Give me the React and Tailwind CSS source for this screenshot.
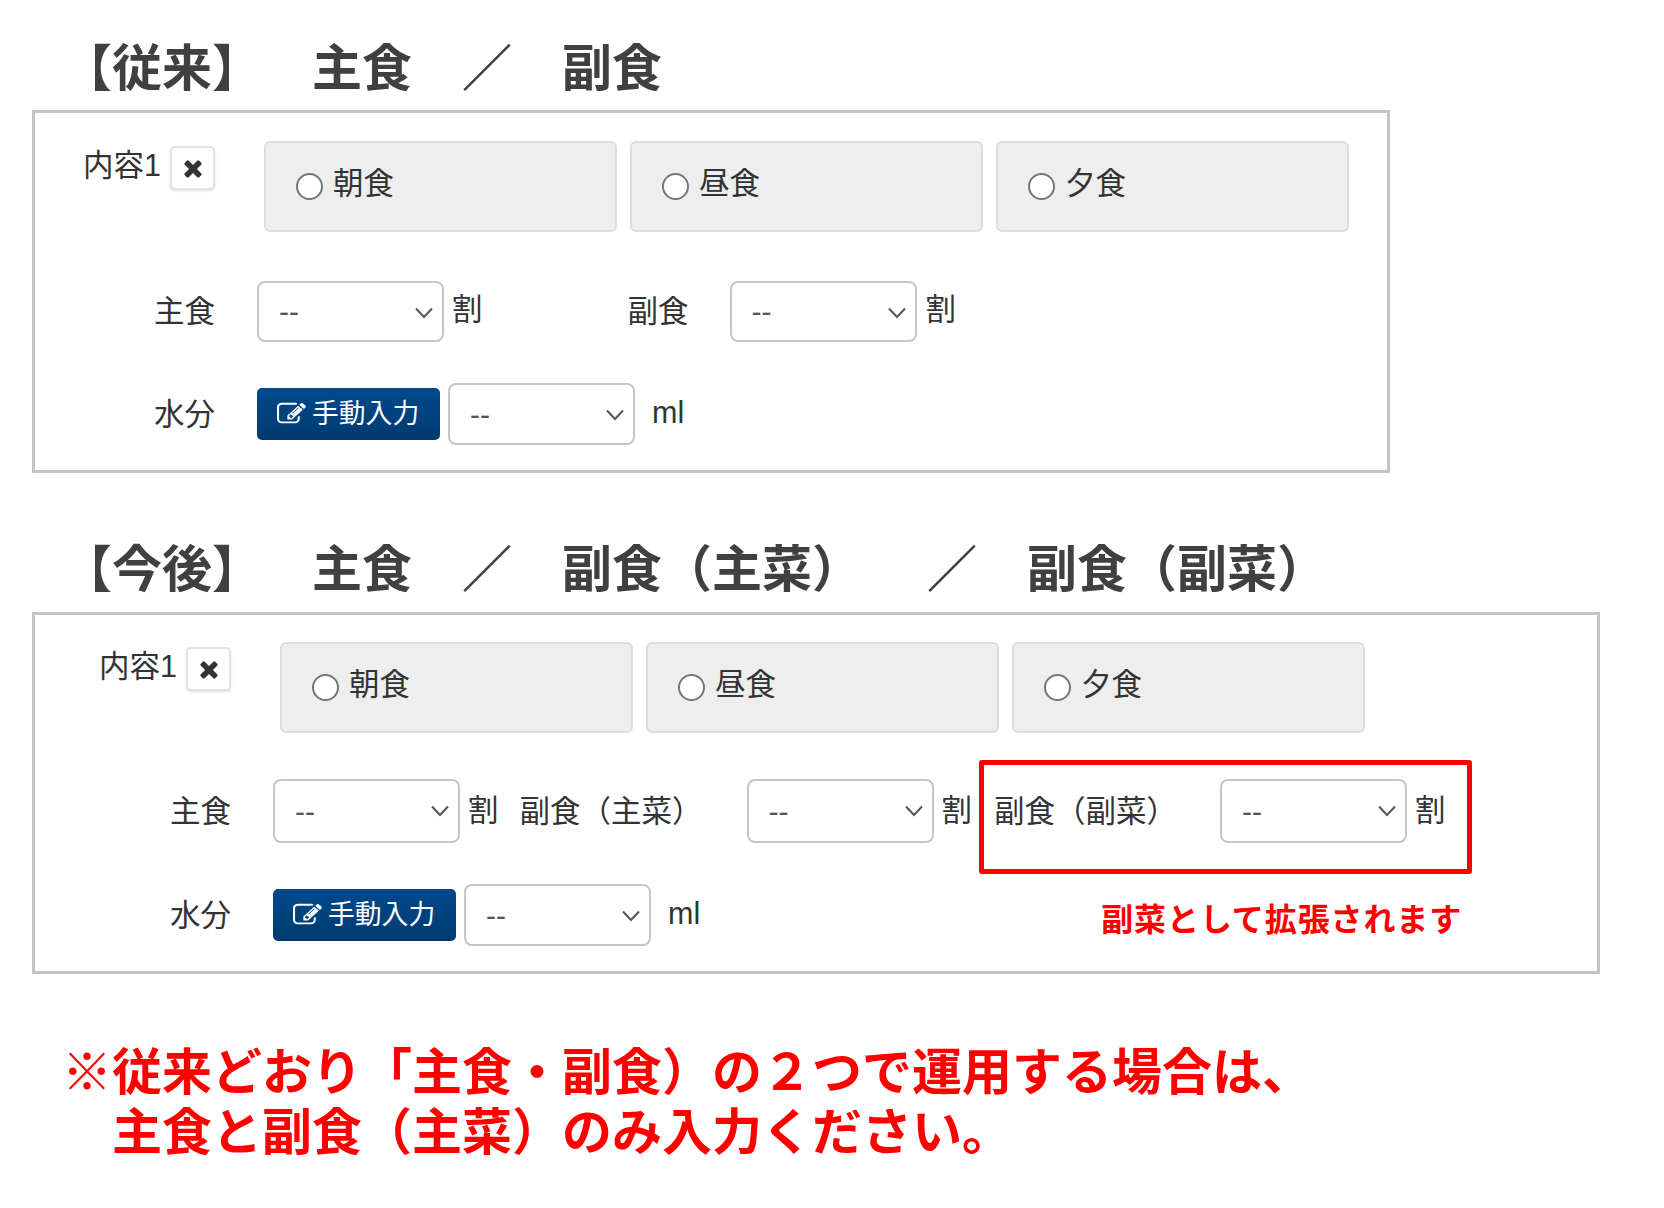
import React from 'react';

const BASE_FONT = "font-['Liberation_Sans','Noto_Sans_CJK_JP',sans-serif]";
const JP_FONT = "font-['Noto_Sans_CJK_JP','Liberation_Sans',sans-serif]";

const TimesIcon = () => (
  <svg className="w-[26px] h-[26px]" viewBox="0 0 1792 1792" fill="#333">
    <path d="M1490 1322q0 40-28 68l-136 136q-28 28-68 28t-68-28l-294-294-294 294q-28 28-68 28t-68-28l-136-136q-28-28-28-68t28-68l294-294-294-294q-28-28-28-68t28-68l136-136q28-28 68-28t68 28l294 294 294-294q28-28 68-28t68 28l136 136q28 28 28 68t-28 68l-294 294 294 294q28 28 28 68z" />
  </svg>
);

const PencilSquareIcon = () => (
  <svg className="w-[29px] h-[26px] shrink-0" viewBox="0 0 1792 1792" fill="#fff" preserveAspectRatio="none">
    <path d="M888 1184l116-116-152-152-116 116v56h96v96h56zm440-720q-16-16-33 1l-350 350q-17 17-1 33t33-1l350-350q17-17 1-33zm80 594v190q0 119-84.5 203.5t-203.5 84.5h-832q-119 0-203.5-84.5t-84.5-203.5v-832q0-119 84.5-203.5t203.5-84.5h832q63 0 117 25 15 7 18 23 3 17-9 29l-49 49q-14 14-32 8-23-6-45-6h-832q-66 0-113 47t-47 113v832q0 66 47 113t113 47h832q66 0 113-47t47-113v-126q0-13 9-22l64-64q15-15 35-7t20 29zm-96-738l288 288-672 672h-288v-288zm444 132l-92 92-288-288 92-92q28-28 68-28t68 28l152 152q28 28 28 68t-28 68z" />
  </svg>
);

const Select = ({ className = '', height = 'h-[61px]' }) => (
  <div className={`relative w-[187px] shrink-0 ${height} ${className}`}>
    <select className="appearance-none w-full h-full pl-[20px] border-2 border-[#c6c6c6] rounded-[8px] bg-white text-[#555] text-[30px] outline-none">
      <option>--</option>
    </select>
    <svg className="absolute right-[10px] top-[26px]" width="20" height="12" viewBox="0 0 20 12" fill="none">
      <path d="M2 1.5l8 8.5 8-8.5" stroke="#555" strokeWidth="2" />
    </svg>
  </div>
);

const Text = ({ className = '', children }) => (
  <span className={`h-[57px] flex items-center text-[30.5px] text-[#333] whitespace-nowrap shrink-0 ${className}`}>{children}</span>
);

const Tile = ({ label }) => (
  <label className="flex items-start w-[353px] h-[91px] pl-[30px] bg-[#eee] border-2 border-[#ddd] rounded-[6px]">
    <input type="radio" name={label} className="appearance-none w-[27px] h-[27px] mt-[30px] rounded-full border-2 border-[#767676] bg-white shrink-0" />
    <span className="ml-[10px] mt-[19px] text-[30.5px] leading-[42px] text-[#333]">{label}</span>
  </label>
);

const TopRow = () => (
  <div className="flex items-start">
    <span className="w-[87px] -ml-[1px] h-[46px] mt-[1px] text-[30.5px] leading-[46px] text-[#333] shrink-0">内容1</span>
    <button className="flex items-center justify-center w-[45px] h-[44px] mt-[5px] bg-white border-2 border-[#e2e2e2] rounded-[5px] shadow-sm shrink-0">
      <TimesIcon />
    </button>
    <div className="flex gap-[13px] ml-[49px]">
      <Tile label="朝食" />
      <Tile label="昼食" />
      <Tile label="夕食" />
    </div>
  </div>
);

const WaterRow = ({ className = '', children }) => (
  <div className={`flex items-start ml-[70px] ${className}`}>
    <Text className="w-[103px] mt-[3px]">水分</Text>
    <button className="flex items-center w-[183px] h-[52px] mt-[5px] pl-[20px] rounded-[5px] bg-gradient-to-b from-[#004a8c] to-[#003a70] text-white text-[26.8px] shrink-0">
      <PencilSquareIcon />
      <span className="ml-[6px]">手動入力</span>
    </button>
    <Select className="ml-[8px]" height="h-[62px]" />
    <Text className="ml-[17px] mt-[1px]">ml</Text>
    {children}
  </div>
);

const Heading = ({ className = '', children }) => (
  <h2 className={`h-[60px] ml-[30px] text-[50px] leading-[60px] font-bold text-[#404040] whitespace-pre ${JP_FONT} ${className}`}>{children}</h2>
);

export default function App() {
  return (
    <div className={`w-[1664px] h-[1208px] pl-[32px] bg-white overflow-hidden [text-spacing-trim:space-all] ${BASE_FONT}`}>
      <Heading className="mt-[34px]">【従来】　主食　／　副食</Heading>

      {/* 従来 */}
      <div className="w-[1358px] h-[363px] mt-[16px] pt-[28px] pl-[49px] border-[3px] border-[#c4c4c4]">
        <TopRow />
        <div className="flex items-start ml-[70px] mt-[49px]">
          <Text className="w-[103px] mt-[2px]">主食</Text>
          <Select />
          <Text className="ml-[8px]">割</Text>
          <Text className="ml-[145px] w-[102px] mt-[2px]">副食</Text>
          <Select />
          <Text className="ml-[9px]">割</Text>
        </div>
        <WaterRow className="mt-[41px]" />
      </div>

      <Heading className="mt-[62px]">
        【今後】　主食　／　副食（主菜）　<span className="ml-[15px]">／</span>　副食（副菜）
      </Heading>

      {/* 今後 */}
      <div className="w-[1568px] h-[362px] mt-[17px] pt-[27px] pl-[65px] border-[3px] border-[#c4c4c4]">
        <TopRow />
        <div className="flex items-start ml-[70px] mt-[27px]">
          <Text className="w-[103px] mt-[23px]">主食</Text>
          <Select className="mt-[19px]" height="h-[64px]" />
          <Text className="ml-[8px] mt-[22px]">割</Text>
          <Text className="ml-[21px] w-[227px] mt-[23px]">副食（主菜）</Text>
          <Select className="mt-[19px]" height="h-[64px]" />
          <Text className="ml-[8px] mt-[22px]">割</Text>
          <div className="flex items-start w-[493px] h-[114px] ml-[7px] pl-[10px] pt-[14px] border-[5px] border-[#f00] rounded-[3px]">
            <Text className="w-[226px] mt-[4px]">副食（副菜）</Text>
            <Select height="h-[64px]" />
            <Text className="ml-[8px] mt-[3px]">割</Text>
          </div>
        </div>
        <WaterRow className="mt-[10px]">
          <span className={`ml-[401px] mt-[9px] text-[32px] tracking-[0.9px] leading-[48px] font-bold text-[#f00] whitespace-nowrap ${JP_FONT}`}>
            副菜として拡張されます
          </span>
        </WaterRow>
      </div>

      <div className={`mt-[64px] ml-[30px] text-[50px] leading-[60px] font-bold text-[#f00] whitespace-pre ${JP_FONT}`}>
        <p>※従来どおり「主食・副食）の２つで運用する場合は、</p>
        <p>　主食と副食（主菜）のみ入力ください。</p>
      </div>
    </div>
  );
}
